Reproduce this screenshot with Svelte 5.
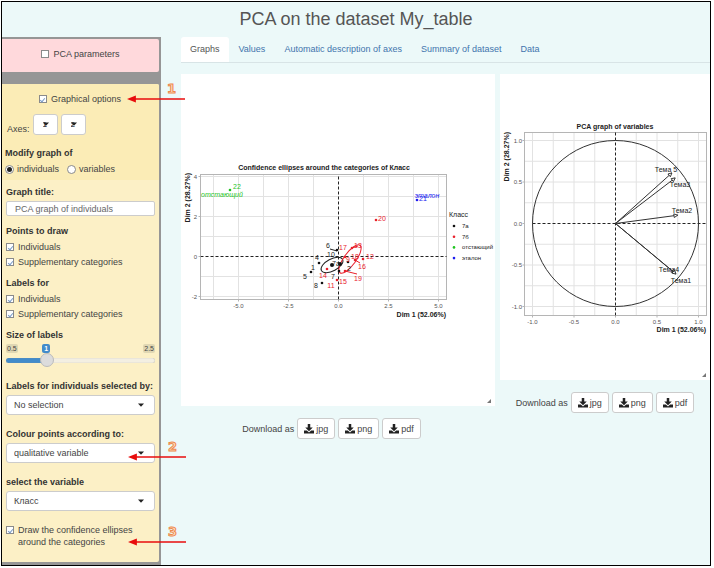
<script lang="ts">
  let showPca = $state(false);
  let showGraphical = $state(true);
  let graphOf = $state("individuals");
  let title = $state("PCA graph of individuals");
  let labelSize = $state(1);
  let ellipses = $state(true);

  const fill = $derived(((labelSize - 0.5) / 2) * 100);

  const tabs = [
    "Graphs",
    "Values",
    "Automatic description of axes",
    "Summary of dataset",
    "Data",
  ];

  const checkGroups = ["Points to draw", "Labels for"];
  const checkItems = ["Individuals", "Supplementary categories"];

  const selects = [
    { id: "selection", label: "Labels for individuals selected by:", value: "No selection" },
    { id: "colour", label: "Colour points according to:", value: "qualitative variable" },
    { id: "variable", label: "select the variable", value: "Класс" },
  ];

  const formats = ["jpg", "png", "pdf"];

  // individuals plot: 20 units of the viewBox per axis unit
  const ix = (v: number) => 157.5 + v * 20;
  const iy = (v: number) => 182.5 - v * 20;

  const points = [
    { x: 156, y: 176, c: "k" },
    { x: 138, y: 189, c: "k" },
    { x: 130, y: 198, c: "k" },
    { x: 141, y: 209, c: "k" },
    { x: 167, y: 188, c: "k" },
    { x: 158, y: 197, c: "k" },
    { x: 151, y: 191, c: "k", r: 2 },
    { x: 159, y: 190, c: "k", r: 2 },
    { x: 195, y: 146, c: "r" },
    { x: 171, y: 174, c: "r" },
    { x: 182, y: 185, c: "r" },
    { x: 146, y: 195, c: "r" },
    { x: 156, y: 206, c: "r" },
    { x: 164, y: 183, c: "r" },
    { x: 174, y: 186, c: "r" },
    { x: 164, y: 197, c: "r" },
    { x: 236, y: 126, c: "b" },
    { x: 49, y: 116, c: "g" },
  ];

  const names = [
    { t: "6", x: 147, y: 174, c: "k" },
    { t: "10", x: 150, y: 183, c: "k" },
    { t: "4", x: 136, y: 186, c: "k" },
    { t: "1", x: 132, y: 196, c: "k" },
    { t: "5", x: 124, y: 205, c: "k" },
    { t: "8", x: 135, y: 214, c: "k" },
    { t: "7", x: 152, y: 205, c: "k" },
    { t: "2", x: 168, y: 197, c: "k" },
    { t: "7а", x: 155, y: 192, c: "k" },
    { t: "17", x: 162, y: 176, c: "r" },
    { t: "13", x: 177, y: 174, c: "r" },
    { t: "20", x: 201, y: 147, c: "r" },
    { t: "12", x: 189, y: 185, c: "r" },
    { t: "18", x: 174, y: 185, c: "r" },
    { t: "9", x: 167, y: 188, c: "r" },
    { t: "16", x: 181, y: 195, c: "r" },
    { t: "14", x: 142, y: 204, c: "r" },
    { t: "11", x: 150, y: 214, c: "r" },
    { t: "15", x: 162, y: 210, c: "r" },
    { t: "19", x: 177, y: 207, c: "r" },
    { t: "21", x: 242, y: 127, c: "b" },
    { t: "22", x: 56, y: 115, c: "g" },
  ];

  const legend = [
    { t: "7а", c: "k" },
    { t: "7б", c: "r" },
    { t: "отстающий", c: "g" },
    { t: "эталон", c: "b" },
  ];

  // variables plot: the unit circle has a radius of 83
  const vx = (v: number) => 115.5 + v * 83;
  const vy = (v: number) => 149.5 - v * 83;

  const variables = [
    { t: "Тема 5", x: 0.68, y: 0.61, lx: 166, ly: 98 },
    { t: "Тема3", x: 0.72, y: 0.55, lx: 180, ly: 113 },
    { t: "Тема2", x: 0.75, y: 0.1, lx: 182, ly: 139 },
    { t: "Тема4", x: 0.72, y: -0.6, lx: 169, ly: 198 },
    { t: "Тема1", x: 0.73, y: -0.61, lx: 181, ly: 209 },
  ];
</script>

{#snippet caret()}
  <svg class="caret" viewBox="0 0 6 4" aria-hidden="true"><path d="M0 .5h6L3 3.7z" /></svg>
{/snippet}

{#snippet downloads()}
  <div class="downloads">
    <span>Download as</span>
    {#each formats as format}
      <button type="button">
        <svg viewBox="0 0 16 16" aria-hidden="true">
          <path d="M6 0h4v5.500h4L8 11.500 2 5.500h4z" />
          <path d="M0 10.500h4.600L8 13.500l3.400-3H16V15H0z" />
        </svg>
        {format}
      </button>
    {/each}
  </div>
{/snippet}

{#snippet marker(n: number)}
  <span class="marker">
    <b>{n}</b>
    <svg viewBox="0 0 59 8" aria-hidden="true">
      <path d="M6 4h53" stroke="#e80c0c" stroke-width="1.4" />
      <path d="M0 4l9-3.500v7z" fill="#e80c0c" />
    </svg>
  </span>
{/snippet}

<div class="page">
  <h1>PCA on the dataset My_table</h1>

  <div class="layout">
    <aside>
      <div class="panel pca">
        <label class="check"><input type="checkbox" bind:checked={showPca} />PCA parameters</label>
      </div>

      <div class="panel options">
        <div class="block top">
          <div class="anchor centered">
            <label class="check">
              <input type="checkbox" bind:checked={showGraphical} />Graphical options
            </label>
            {@render marker(1)}
          </div>

          <div class="axes">
            <span>Axes:</span>
            {#each ["1", "2"] as axis}
              <span class="axis">
                <select aria-label="Axis {axis}"><option>{axis}</option></select>
                {@render caret()}
              </span>
            {/each}
          </div>

          <fieldset>
            <legend>Modify graph of</legend>
            <div class="radios">
              <label class="check">
                <input type="radio" value="individuals" bind:group={graphOf} />individuals
              </label>
              <label class="check">
                <input type="radio" value="variables" bind:group={graphOf} />variables
              </label>
            </div>
          </fieldset>
        </div>

        <div class="block">
          <div class="field">
            <label class="name" for="title">Graph title:</label>
            <input id="title" type="text" bind:value={title} />
          </div>

          {#each checkGroups as group}
            <fieldset>
              <legend>{group}</legend>
              {#each checkItems as item}
                <label class="check"><input type="checkbox" checked />{item}</label>
              {/each}
            </fieldset>
          {/each}

          <div class="field size">
            <label class="name" for="size">Size of labels</label>
            <div class="scale">
              <span>0.5</span>
              <output for="size" style:left="{fill}%">{labelSize}</output>
              <span>2.5</span>
            </div>
            <input
              id="size"
              type="range"
              min="0.5"
              max="2.5"
              step="0.1"
              bind:value={labelSize}
              style:--fill="{fill}%"
            />
          </div>

          {#each selects as s, i}
            <div class="field anchor">
              <label class="name" for={s.id}>{s.label}</label>
              <div class="dropdown">
                <select id={s.id}><option>{s.value}</option></select>
                {@render caret()}
              </div>
              {#if i === 1}{@render marker(2)}{/if}
            </div>
          {/each}

          <div class="anchor">
            <label class="check wrap">
              <input type="checkbox" bind:checked={ellipses} />
              <span>Draw the confidence ellipses around the categories</span>
            </label>
            {@render marker(3)}
          </div>
        </div>
      </div>
    </aside>

    <main>
      <nav>
        {#each tabs as tab, i}
          <a href="#{i}" class:active={i === 0}>{tab}</a>
        {/each}
      </nav>

      <div class="graphs">
        <section>
          <svg class="plot" viewBox="0 0 314 332">
            <text class="title" x="143" y="96">Confidence ellipses around the categories of Класс</text>
            <g class="grid">
              {#each [-6.25, -5, -3.75, -2.5, -1.25, 1.25, 2.5, 3.75, 5] as v}
                <path d="M{ix(v)} 100.500V225.500" />
              {/each}
              {#each [-2, -1, 1, 2, 3, 4] as v}
                <path d="M19.500 {iy(v)}H265.500" />
              {/each}
            </g>
            <rect class="border" x="19.500" y="100.500" width="246" height="125" />
            <path class="dash" d="M19.500 182.500H265.500M157.500 225.500V100.500" />
            {#each [-5, -2.5, 0, 2.5, 5] as v}
              <path class="tick" d="M{ix(v)} 225.500v2" />
              <text class="num" x={ix(v)} y="234">{v.toFixed(1)}</text>
            {/each}
            {#each [-2, 0, 2, 4] as v}
              <path class="tick" d="M17.500 {iy(v)}h2" />
              <text class="num end" x="16" y={iy(v) + 2}>{v}</text>
            {/each}
            <text class="axis-name end" x="265" y="243">Dim 1 (52.06%)</text>
            <text class="axis-name end" transform="translate(9 99) rotate(-90)">Dim 2 (28.27%)</text>

            <ellipse class="k" cx="151" cy="191" rx="12" ry="6" transform="rotate(-28 151 191)" />
            <ellipse class="r" cx="169" cy="185" rx="17" ry="6" transform="rotate(-54 169 185)" />
            <path class="leader k" d="M149 175l7 2" />
            <path class="leader r" d="M164 197l12 3M174 186l5 3M171 174l6-2" />
            {#each points as p}
              <circle class={p.c} cx={p.x} cy={p.y} r={p.r ?? 1.3} />
            {/each}
            {#each names as n}
              <text class="pt {n.c}" x={n.x} y={n.y}>{n.t}</text>
            {/each}
            <text class="pt italic g" x="41" y="123">отстающий</text>
            <text class="pt italic b" x="246" y="124">эталон</text>

            <text class="legend-title" x="268" y="143">Класс</text>
            {#each legend as l, i}
              <circle class={l.c} cx="273" cy={152 + i * 10.7} r="1.3" />
              <text class="legend-item" x="281" y={154 + i * 10.7}>{l.t}</text>
            {/each}
            <path class="grip" d="M310 325v4h-4z" />
          </svg>
          {@render downloads()}
        </section>

        <section>
          <svg class="plot" viewBox="0 0 210 306">
            <defs>
              <marker id="head" viewBox="0 0 6 6" refX="5.500" refY="3" markerWidth="5" markerHeight="5" orient="auto">
                <path d="M1 .8L5.500 3 1 5.200z" fill="#fff" stroke="#222" />
              </marker>
            </defs>
            <text class="title" x="115" y="55">PCA graph of variables</text>
            <g class="grid">
              {#each [-1, -0.75, -0.5, -0.25, 0.25, 0.5, 0.75, 1] as v}
                <path d="M{vx(v)} 58.500V241.500M24.500 {vy(v)}H206.500" />
              {/each}
            </g>
            <rect class="border" x="24.500" y="58.500" width="182" height="183" />
            <path class="dash" d="M32.500 149.500H206.500M115.500 241.500V58.500" />
            {#each [-1, -0.5, 0, 0.5, 1] as v}
              <path class="tick" d="M{vx(v)} 241.500v2M22.500 {vy(v)}h2" />
              <text class="num" x={vx(v)} y="250">{v.toFixed(1)}</text>
              <text class="num end" x="22" y={vy(v) + 2}>{v.toFixed(1)}</text>
            {/each}
            <text class="axis-name end" x="206" y="258">Dim 1 (52.06%)</text>
            <text class="axis-name end" transform="translate(9 58) rotate(-90)">Dim 2 (28.27%)</text>
            <circle class="unit" cx="115.500" cy="149.500" r="83" />
            {#each variables as v}
              <path class="arrow" d="M115.500 149.500L{vx(v.x)} {vy(v.y)}" marker-end="url(#head)" />
              <text class="pt k" x={v.lx} y={v.ly}>{v.t}</text>
            {/each}
            <path class="grip" d="M206 299v4h-4z" />
          </svg>
          {@render downloads()}
        </section>
      </div>
    </main>
  </div>
</div>

<style>
  :global(body) {
    background: #fff;
  }

  .page {
    margin: 1px 3px 1px 1px;
    border: 1px solid #000;
    background: #ecf9f9;
    color: #444;
    font: 9px/12px "Liberation Sans", Arial, sans-serif;
  }

  h1 {
    margin: 0;
    font-size: 18px;
    font-weight: normal;
    line-height: 35px;
    text-align: center;
    color: #555;
  }

  .layout {
    display: grid;
    grid-template-columns: 159px 1fr;
    column-gap: 20px;
  }

  aside {
    padding: 2px 2px 3px 0;
    background: #969696;
    display: flex;
    flex-direction: column;
    gap: 12px;
  }

  .panel {
    border-radius: 0 2px 2px 0;
  }

  .pca {
    display: flex;
    justify-content: center;
    padding: 9px 0 12px;
    background: #ffd9dc;
  }

  .options {
    background: #fcf0c6;
  }

  .block {
    padding: 6px 4px 14px;
  }

  .block.top {
    padding: 9px 4px 5px 3px;
    border-radius: 0 2px 0 0;
    background: #fbecb6;
  }

  .anchor {
    position: relative;
  }

  .centered {
    display: flex;
    justify-content: center;
  }

  .check {
    display: flex;
    align-items: center;
    gap: 4px;
  }

  .check + .check {
    margin-top: 3px;
  }

  input,
  select,
  button {
    margin: 0;
    font: inherit;
    color: #444;
    box-sizing: border-box;
  }

  input[type="checkbox"],
  input[type="radio"] {
    appearance: none;
    flex: none;
    display: grid;
    place-items: center;
    width: 8px;
    height: 8px;
    border: 1px solid #8a8a8a;
    background: #fff;
  }

  input[type="checkbox"]:checked::after {
    content: "";
    width: 2px;
    height: 4px;
    border: solid #7a9cc8;
    border-width: 0 1px 1px 0;
    transform: rotate(40deg);
  }

  input[type="radio"] {
    width: 9px;
    height: 9px;
    border-radius: 50%;
  }

  input[type="radio"]:checked::after {
    content: "";
    width: 5px;
    height: 5px;
    border-radius: 50%;
    background: #222;
  }

  .axes {
    display: flex;
    align-items: flex-end;
    gap: 3px;
    margin: 9px 0 12px;
    padding-left: 2px;
  }

  .axis,
  .dropdown {
    position: relative;
    display: flex;
  }

  select {
    appearance: none;
    width: 100%;
    height: 20px;
    padding: 0 7px;
    border: 1px solid #ccc;
    border-radius: 3px;
    background: #fff;
  }

  .axis select {
    width: 25px;
    height: 21px;
    padding: 0 9px;
    font-size: 8px;
    font-weight: bold;
  }

  .caret {
    position: absolute;
    right: 11px;
    top: 8px;
    width: 6px;
    height: 4px;
    fill: #222;
    pointer-events: none;
  }

  .axis .caret {
    right: 9px;
  }

  fieldset {
    margin: 0;
    padding: 0;
    border: 0;
  }

  legend,
  .name {
    display: block;
    margin-bottom: 4px;
    padding: 0;
    font-weight: bold;
    color: #333;
  }

  .radios {
    display: flex;
    gap: 8px;
  }

  .radios .check {
    gap: 3px;
    margin: 0;
  }

  .block:not(.top) fieldset {
    margin-bottom: 9px;
  }

  .field {
    margin-bottom: 13px;
  }

  .field .name {
    margin-bottom: 3px;
  }

  .field:first-child {
    margin-bottom: 9px;
  }

  input[type="text"] {
    display: block;
    width: 100%;
    height: 15px;
    padding: 0 8px;
    border: 1px solid #ccc;
    border-radius: 2px;
    background: #fff;
    color: #666;
  }

  .scale {
    position: relative;
    display: flex;
    justify-content: space-between;
    font-size: 7px;
    line-height: 9px;
  }

  .scale span {
    padding: 0 1px;
    border-radius: 2px;
    background: #e0d7b3;
  }

  .scale output {
    position: absolute;
    top: 0;
    margin-left: -1px;
    padding: 0 2px;
    border-radius: 2px;
    background: #428bca;
    color: #fff;
    font-weight: bold;
  }

  input[type="range"] {
    appearance: none;
    display: block;
    width: 100%;
    height: 14px;
    border-radius: 3px;
    background: none;
  }

  input[type="range"]::-webkit-slider-runnable-track {
    height: 5px;
    border-radius: 3px;
    background: linear-gradient(to right, #428bca var(--fill), #f3efe2 var(--fill));
    box-shadow: inset 0 0 1px #999;
  }

  input[type="range"]::-webkit-slider-thumb {
    appearance: none;
    width: 14px;
    height: 14px;
    margin-top: -5px;
    border: 1px solid #bbb;
    border-radius: 50%;
    background: #dcdcdc;
  }

  .wrap {
    align-items: flex-start;
  }

  .wrap input {
    margin-top: 2px;
  }

  .wrap span {
    max-width: 120px;
  }

  .marker {
    position: absolute;
    left: 122px;
    bottom: 2px;
    width: 58px;
    pointer-events: none;
  }

  .marker svg {
    display: block;
    width: 58px;
    height: 8px;
  }

  .marker b {
    display: block;
    margin-left: 40px;
    font-family: "DejaVu Sans", sans-serif;
    font-size: 13px;
    line-height: 12px;
    color: #fbdcc4;
    -webkit-text-stroke: 1px #ee8a4c;
  }

  main {
    min-width: 0;
  }

  nav {
    display: flex;
    gap: 1px;
    height: 25px;
    border-bottom: 1px solid #d8e4e6;
  }

  nav a {
    padding: 6px 9px 7px;
    color: #3f74ad;
    text-decoration: none;
  }

  nav a.active {
    border-radius: 3px 3px 0 0;
    background: #fff;
    color: #555;
  }

  .graphs {
    display: grid;
    grid-template-columns: 314fr 210fr;
    column-gap: 5px;
    margin-top: 11px;
  }

  .plot {
    display: block;
    width: 100%;
    background: #fff;
    fill: none;
  }

  .plot text {
    fill: #222;
    text-anchor: middle;
    stroke: none;
  }

  .plot .end {
    text-anchor: end;
  }

  .title,
  .axis-name {
    font-size: 7px;
    font-weight: bold;
  }

  .plot .num {
    font-size: 6px;
    fill: #555;
  }

  .pt,
  .legend-title {
    font-size: 7px;
  }

  .italic {
    font-style: italic;
  }

  .legend-item {
    font-size: 6px;
  }

  .plot .legend-title,
  .plot .legend-item {
    text-anchor: start;
  }

  .grid {
    stroke: #e2e2e2;
  }

  .border,
  .tick {
    stroke: #b5b5b5;
  }

  .dash {
    stroke: #222;
    stroke-dasharray: 3 2;
  }

  .unit,
  .arrow {
    stroke: #333;
  }

  circle.k {
    fill: #111;
  }

  circle.r,
  .plot text.r {
    fill: #e8202c;
  }

  circle.g,
  .plot text.g {
    fill: #1fc41f;
  }

  circle.b,
  .plot text.b {
    fill: #1c1cf0;
  }

  ellipse.k,
  .leader.k {
    stroke: #222;
  }

  ellipse.r,
  .leader.r {
    stroke: #e8202c;
  }

  .grip {
    fill: #777;
  }

  .downloads {
    display: flex;
    align-items: center;
    justify-content: center;
    gap: 3px;
    padding-top: 12px;
  }

  section:first-child .downloads {
    padding-right: 13px;
  }

  button {
    display: flex;
    align-items: center;
    gap: 2px;
    height: 21px;
    padding: 0 6px;
    border: 1px solid #ccc;
    border-radius: 3px;
    background: #fff;
  }

  button svg {
    width: 10px;
    height: 10px;
    fill: #222;
  }
</style>
